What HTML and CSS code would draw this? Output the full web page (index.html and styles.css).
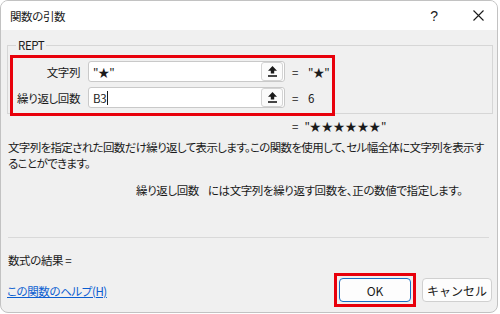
FILE: index.html
```html
<!DOCTYPE html>
<html lang="ja">

<head>
    <meta charset="UTF-8">
    <title>関数の引数</title>
    <link rel="stylesheet" href="styles.css">
</head>

<body>

    <div class="dialog">
        <div class="titlebar">
            <div class="title">関数の引数</div>
            <div class="tb-help">?</div>
            <div class="tb-close">
                <svg width="11" height="11" viewBox="0 0 11 11">
                    <path d="M0.5 0.5 L10.5 10.5 M10.5 0.5 L0.5 10.5" stroke="#1a1a1a" stroke-width="1.1" fill="none" />
                </svg>
            </div>
        </div>

        <div class="content">
            <fieldset class="group">
                <legend>REPT</legend>
                <div class="args">
                    <div class="arg-row">
                        <div class="arg-label">文字列</div>
                        <div class="arg-input">
                            <span class="arg-text">"★"</span>
                            <span class="ref-btn">
                                <svg width="9" height="11" viewBox="0 0 9 11">
                                    <path d="M4.5 0 L9 4.8 H6.2 V7.6 H2.8 V4.8 H0 Z" fill="#1a1a1a" />
                                    <rect x="0" y="9.2" width="9" height="1.6" fill="#1a1a1a" />
                                </svg>
                            </span>
                        </div>
                        <div class="arg-eq">=</div>
                        <div class="arg-value">"★"</div>
                    </div>
                    <div class="arg-row">
                        <div class="arg-label">繰り返し回数</div>
                        <div class="arg-input">
                            <span class="arg-text">B3<span class="caret"></span></span>
                            <span class="ref-btn">
                                <svg width="9" height="11" viewBox="0 0 9 11">
                                    <path d="M4.5 0 L9 4.8 H6.2 V7.6 H2.8 V4.8 H0 Z" fill="#1a1a1a" />
                                    <rect x="0" y="9.2" width="9" height="1.6" fill="#1a1a1a" />
                                </svg>
                            </span>
                        </div>
                        <div class="arg-eq">=</div>
                        <div class="arg-value">6</div>
                    </div>
                </div>
            </fieldset>

            <div class="result-line">=&nbsp;&nbsp;&nbsp;"<span class="stars">★★★★★★</span>"</div>

            <p class="desc">文字列を指定された回数だけ繰り返して表示します。この関数を使用して、セル幅全体に文字列を表示することができます。</p>

            <p class="arg-desc"><span class="arg-name">繰り返し回数</span>には文字列を繰り返す回数を、正の数値で指定します。</p>

            <div class="separator"></div>

            <div class="formula-result">数式の結果 =</div>

            <div class="footer">
                <a class="help-link" href="#">この関数のヘルプ(H)</a>
                <span class="mark">
                    <button class="btn btn-ok">OK</button>
                </span>
                <button class="btn btn-cancel">キャンセル</button>
            </div>
        </div>
    </div>

</body>

</html>
```

FILE: styles.css
```css
* {
    box-sizing: border-box;
}

body {
    margin: 0;
    background-color: #ffffff;
    font-family: "Noto Sans CJK JP", "Noto Sans", sans-serif;
    font-feature-settings: "palt";
    font-size: 11.5px;
    letter-spacing: -0.4px;
    color: #1a1a1a;
}

.dialog {
    width: 498px;
    height: 313px;
    border: 1px solid #c2c2c2;
    border-radius: 8px;
    overflow: hidden;
    background-color: #f0f0f0;
    display: flex;
    flex-direction: column;
}

.titlebar {
    height: 29px;
    background-color: #ffffff;
    display: flex;
    align-items: center;
    padding-left: 9px;
    flex-shrink: 0;
}

.title {
    flex: 1;
    padding-top: 1px;
}

.tb-help {
    width: 50px;
    text-align: center;
    font-family: "Liberation Sans", sans-serif;
    font-size: 14px;
}

.tb-close {
    width: 38px;
    display: flex;
    justify-content: center;
    align-items: center;
}

.content {
    padding: 0 4px 0 6px;
    display: flex;
    flex-direction: column;
}

.group {
    margin: 7px 0 0;
    padding: 5px 0 0 5px;
    border: 1px solid #d6d6d6;
    min-width: 0;
}

.group legend {
    padding: 0 2px;
    margin-left: 3px;
    line-height: 16px;
}

.args {
    width: 319px;
    padding: 3px 0 5px;
    display: flex;
    flex-direction: column;
    gap: 5px;
    outline: 3px solid #e8000b;
}

.arg-row {
    display: flex;
    align-items: center;
    height: 21px;
    white-space: nowrap;
}

.arg-label {
    width: 67px;
    text-align: right;
    margin-right: 8px;
}

.arg-input {
    width: 197px;
    height: 21px;
    background-color: #ffffff;
    border: 1px solid #c9c9c9;
    border-radius: 3px;
    display: flex;
    align-items: center;
    padding-left: 4px;
}

.arg-text {
    flex: 1;
    display: flex;
    align-items: center;
}

.caret {
    display: inline-block;
    width: 1px;
    height: 14px;
    background-color: #1a1a1a;
    margin-left: 1px;
}

.ref-btn {
    width: 22px;
    height: 19px;
    margin-right: 1px;
    border: 1px solid #d4d4d4;
    border-radius: 3px;
    background-color: #fbfbfb;
    display: flex;
    justify-content: center;
    align-items: center;
}

.arg-eq {
    margin-left: 7px;
    width: 16px;
}

.result-line {
    margin-top: 4px;
    padding-left: 285px;
    line-height: 16px;
    white-space: nowrap;
}

.stars {
    letter-spacing: 0.4px;
}

.desc {
    margin: 5px 0 0;
    line-height: 16px;
    padding-left: 1px;
    letter-spacing: -0.65px;
}

.arg-desc {
    margin: 11px 0 0;
    padding-left: 129px;
    line-height: 16px;
    white-space: nowrap;
}

.arg-name {
    margin-right: 9px;
}

.separator {
    margin-top: 39px;
    height: 1px;
    background-color: #d9d9d9;
    margin-right: 4px;
    margin-left: 1px;
}

.formula-result {
    margin-top: 14px;
    line-height: 16px;
    padding-left: 1px;
}

.footer {
    margin-top: 5px;
    display: flex;
    align-items: center;
}

.help-link {
    flex: 1;
    color: #0b5ed0;
    text-decoration: underline;
    padding-top: 2px;
}

.mark {
    border: 3px solid #e8000b;
    padding: 2px;
    margin-right: 6px;
    display: flex;
}

.btn {
    height: 24px;
    font-family: inherit;
    font-size: 12px;
    color: #1a1a1a;
    background-color: #fdfdfd;
    border: 1px solid #d0d0d0;
    border-radius: 4px;
    padding: 0;
}

.btn-ok {
    width: 72px;
    border-color: #1a6fc4;
}

.btn-cancel {
    width: 70px;
    margin-right: 1px;
}
```
